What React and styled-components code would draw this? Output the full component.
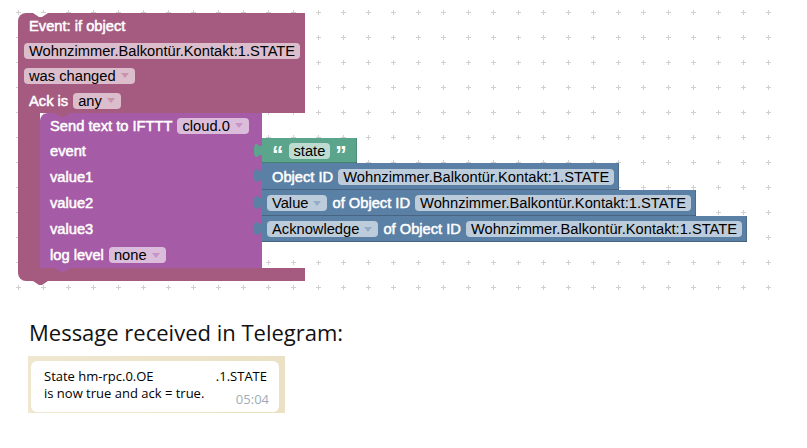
import styled, { createGlobalStyle } from "styled-components";

const EVENT = "#a55b80";
const PROC = "#a55ba5";
const BLUE = "#5b80a5";
const GREEN = "#5ba58c";

// field backgrounds: block colour under 60% white
const tint = {
  [EVENT]: "#dbbdcc",
  [PROC]: "#dbbddb",
  [BLUE]: "#bdccdb",
  [GREEN]: "#bddbd1",
};
const arrowTint = {
  [EVENT]: "#c794ad",
  [PROC]: "#c794c7",
  [BLUE]: "#94adc7",
};

const GlobalStyle = createGlobalStyle`
  body {
    margin: 0;
    background: #fff;
    font-family: "Liberation Sans", Arial, sans-serif;
  }
`;

const Workspace = styled.div`
  position: relative;
  width: 782px;
  height: 297px;
  padding: 13px 0 0 18px;
  box-sizing: border-box;
`;

const GridLayer = styled.svg`
  position: absolute;
  left: 0;
  top: 0;
  z-index: 0;
`;

const EventBlock = styled.div`
  position: relative;
  z-index: 1;
  width: 287px;
  display: flex;
  flex-direction: column;
  font-size: 14.7px;
`;

const Header = styled.div`
  position: relative;
  background: ${EVENT};
  border-radius: 8px 0 0 0;
  padding: 0 6px;
  display: flex;
  flex-direction: column;
`;

const Row = styled.div`
  display: flex;
  align-items: center;
  height: ${({ h }) => h || 25}px;
`;

const Body = styled.div`
  display: flex;
`;

const Arm = styled.div`
  flex: none;
  width: 22px;
  background: ${EVENT};
`;

const Statement = styled.div`
  flex: none;
  display: flex;
  flex-direction: column;
`;

const StmtRow = styled.div`
  display: flex;
  height: ${({ h }) => h}px;
`;

const ProcCell = styled.div`
  position: relative;
  width: 222px;
  flex: none;
  box-sizing: border-box;
  padding-left: 5px;
  display: flex;
  align-items: center;
  background: ${PROC};
  border-top-left-radius: ${({ first }) => (first ? 8 : 0)}px;
`;

const ValueBlock = styled.div`
  position: relative;
  display: flex;
  align-items: center;
  padding: 0 5px;
  background: ${({ color }) => color};
  box-shadow: inset 0 -1px 0 rgba(0, 0, 0, 0.22), inset -1px 0 0 rgba(0, 0, 0, 0.15);
`;

const Footer = styled.div`
  position: relative;
  height: 13px;
  background: ${EVENT};
  border-radius: 0 0 0 8px;
`;

const Label = styled.span`
  color: #fff;
  padding: 0 5px;
  white-space: nowrap;
  -webkit-text-stroke: 0.5px #fff;
`;

const Quote = styled.span`
  color: #fff;
  font-weight: 700;
  font-size: 23px;
  line-height: 22px;
  margin-top: 8px;
  padding: 0 5px;
`;

const Field = styled.span`
  display: inline-flex;
  align-items: center;
  height: 16px;
  padding: 0 ${({ dropdown }) => (dropdown ? 6 : 5)}px 0 5px;
  border-radius: 4px;
  background: ${({ bg }) => bg};
  color: #000;
  white-space: nowrap;
`;

const Arrow = styled.span`
  width: 0;
  height: 0;
  margin-left: 5px;
  border-left: 4.5px solid transparent;
  border-right: 4.5px solid transparent;
  border-top: 5px solid ${({ color }) => color};
`;

const Notch = styled.svg`
  position: absolute;
  left: 15px;
  top: ${({ down }) => (down ? "auto" : "0")};
  bottom: ${({ down }) => (down ? "-4px" : "auto")};
  z-index: 2;
`;

const Tab = styled.svg`
  position: absolute;
  left: -8px;
  top: 5px;
`;

const Telegram = styled.section`
  padding: 20px 0 0 28px;
`;

const Heading = styled.h2`
  margin: 0 0 9px 1px;
  font-family: "Open Sans", sans-serif;
  font-weight: 400;
  font-size: 22px;
  line-height: 30px;
  color: #111;
`;

const ChatBack = styled.div`
  width: 257px;
  height: 57px;
  box-sizing: border-box;
  padding: 5px 6px 1px 3px;
  background: linear-gradient(90deg, #efe7d0, #ebe1c4);
`;

const Bubble = styled.div`
  height: 100%;
  box-sizing: border-box;
  padding: 7px 10px 0 13px;
  background: #fff;
  border-radius: 6px;
  font-family: "Open Sans", sans-serif;
  font-size: 13px;
  line-height: 17px;
  color: #000;
`;

const Line = styled.div`
  display: flex;
  justify-content: space-between;
  align-items: flex-start;
  padding-right: ${({ pr }) => pr || 0}px;
`;

const Time = styled.span`
  margin-top: 6px;
  color: #a0acb7;
`;

const Dropdown = ({ text, color }) => (
  <Field bg={tint[color]} dropdown>
    {text}
    <Arrow color={arrowTint[color]} />
  </Field>
);

const NotchShape = ({ fill, down }) => (
  <Notch width="15" height="4" down={down}>
    <path d="M0,0 L6,4 L9,4 L15,0 Z" fill={fill} />
  </Notch>
);

const Value = ({ color, children }) => (
  <ValueBlock color={color}>
    <Tab width="8" height="15">
      <path d="M8,0 C8,10 0,-8 0,7.5 S8,5 8,15 Z" fill={color} />
    </Tab>
    {children}
  </ValueBlock>
);

const OID = "Wohnzimmer.Balkontür.Kontakt:1.STATE";

const Grid = () => (
  <GridLayer width="782" height="297">
    <defs>
      <pattern id="ws-grid" width="25" height="25" patternUnits="userSpaceOnUse">
        <rect x="16" y="12" width="5" height="1" fill="#d0d0d0" />
        <rect x="18" y="10" width="1" height="5" fill="#d0d0d0" />
      </pattern>
    </defs>
    <rect width="782" height="297" fill="url(#ws-grid)" />
  </GridLayer>
);

export default function App() {
  return (
    <>
      <GlobalStyle />
      <Workspace>
        <Grid />
        <EventBlock>
          <Header>
            <NotchShape fill="#fff" />
            <Row>
              <Label>Event: if object</Label>
            </Row>
            <Row>
              <Field bg={tint[EVENT]}>{OID}</Field>
            </Row>
            <Row>
              <Dropdown text="was changed" color={EVENT} />
            </Row>
            <Row>
              <Label>Ack is</Label>
              <Dropdown text="any" color={EVENT} />
            </Row>
          </Header>
          <Body>
            <Arm />
            <Statement>
              <StmtRow h={25}>
                <ProcCell first>
                  <NotchShape fill={EVENT} />
                  <Label>Send text to IFTTT</Label>
                  <Dropdown text="cloud.0" color={PROC} />
                </ProcCell>
              </StmtRow>
              <StmtRow h={25}>
                <ProcCell>
                  <Label>event</Label>
                </ProcCell>
                <Value color={GREEN}>
                  <Quote>“</Quote>
                  <Field bg={tint[GREEN]}>state</Field>
                  <Quote>”</Quote>
                </Value>
              </StmtRow>
              <StmtRow h={27}>
                <ProcCell>
                  <Label>value1</Label>
                </ProcCell>
                <Value color={BLUE}>
                  <Label>Object ID</Label>
                  <Field bg={tint[BLUE]}>{OID}</Field>
                </Value>
              </StmtRow>
              <StmtRow h={26}>
                <ProcCell>
                  <Label>value2</Label>
                </ProcCell>
                <Value color={BLUE}>
                  <Dropdown text="Value" color={BLUE} />
                  <Label>of Object ID</Label>
                  <Field bg={tint[BLUE]}>{OID}</Field>
                </Value>
              </StmtRow>
              <StmtRow h={26}>
                <ProcCell>
                  <Label>value3</Label>
                </ProcCell>
                <Value color={BLUE}>
                  <Dropdown text="Acknowledge" color={BLUE} />
                  <Label>of Object ID</Label>
                  <Field bg={tint[BLUE]}>{OID}</Field>
                </Value>
              </StmtRow>
              <StmtRow h={26}>
                <ProcCell>
                  <Label>log level</Label>
                  <Dropdown text="none" color={PROC} />
                  <NotchShape fill={PROC} down />
                </ProcCell>
              </StmtRow>
            </Statement>
          </Body>
          <Footer>
            <NotchShape fill={EVENT} down />
          </Footer>
        </EventBlock>
      </Workspace>
      <Telegram>
        <Heading>Message received in Telegram:</Heading>
        <ChatBack>
          <Bubble>
            <Line pr={2}>
              <span>State hm-rpc.0.OE</span>
              <span>.1.STATE</span>
            </Line>
            <Line>
              <span>is now true and ack = true.</span>
              <Time>05:04</Time>
            </Line>
          </Bubble>
        </ChatBack>
      </Telegram>
    </>
  );
}
